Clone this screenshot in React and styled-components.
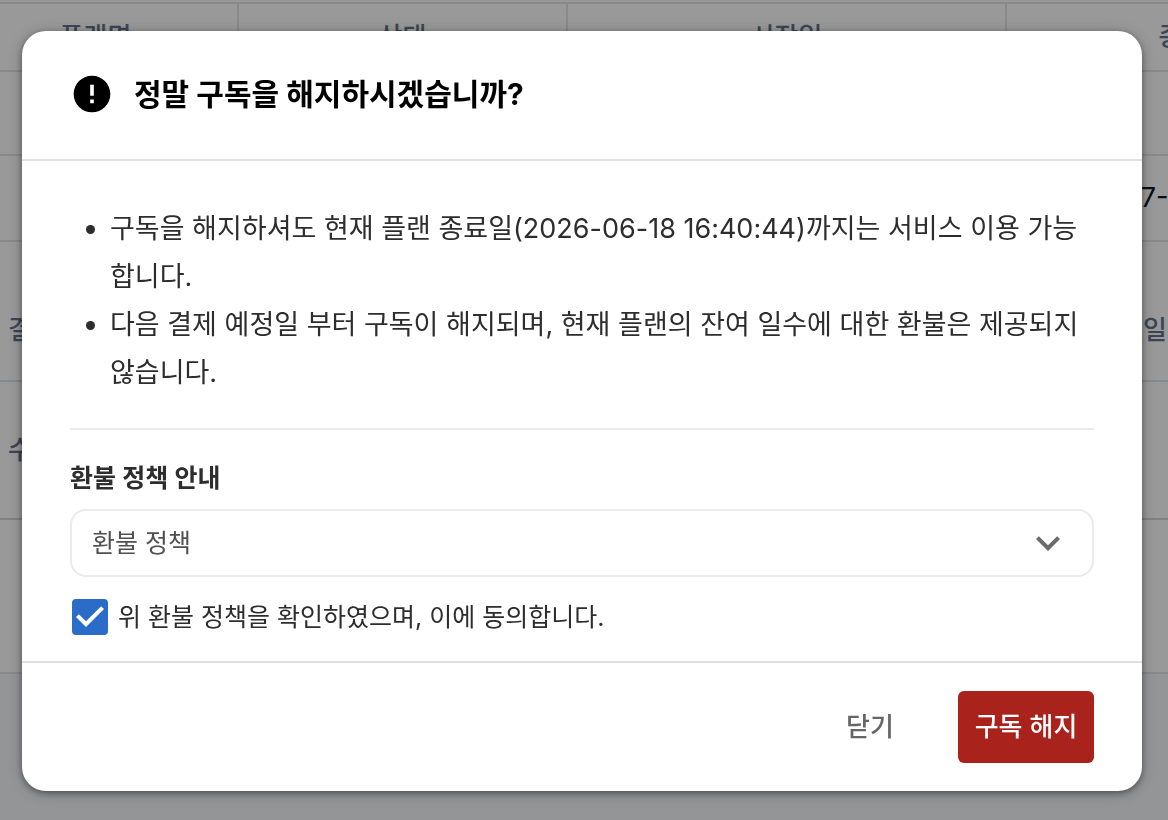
import React, { useState } from 'react';
import styled, { createGlobalStyle } from 'styled-components';
import { MdError, MdExpandMore } from 'react-icons/md';

const GlobalStyle = createGlobalStyle`
  *, *::before, *::after {
    box-sizing: border-box;
  }
  body {
    margin: 0;
    background: #f7f8fb;
    color: #2d2d2d;
    font-family: Inter, 'Noto Sans CJK KR', sans-serif;
    overflow: hidden;
  }
  button, input {
    font: inherit;
  }
`;

const Page = styled.div`
  height: 100vh;
  overflow: hidden;
`;

const Panel = styled.main`
  padding-top: 2px;
  background: #fff;
  border-bottom: 2px solid #e2e4ee;
`;

const PlanTable = styled.table`
  width: 1430px;
  margin-left: -46px;
  table-layout: fixed;
  border-collapse: separate;
  border-spacing: 0;
  border-top: 2px solid #e5e5e5;
  font-size: 27px;
  line-height: 32px;
`;

const HeadCell = styled.th`
  width: ${(props) => props.$width}px;
  height: 68px;
  padding: 0;
  border-right: 2px solid #e5e5e5;
  border-bottom: 2px solid #e5e5e5;
  color: #64748b;
  font-size: 26px;
  font-weight: 500;
`;

const Cell = styled.td`
  height: ${(props) => props.$height}px;
  padding: 0 38px;
  border-bottom: 2px solid #e5e5e5;
  color: #0f172a;
`;

const InfoRow = styled.div`
  display: flex;
  align-items: center;
  justify-content: space-between;
  height: ${(props) => props.$height}px;
  padding: ${(props) => props.$top || 0}px 1px 0 8px;
  border-bottom: 2px solid ${(props) => props.$line};
  color: #64748b;
  font-size: 26px;
  font-weight: 500;
  line-height: 36px;
`;

const Backdrop = styled.div`
  position: fixed;
  inset: 0;
  display: flex;
  align-items: flex-start;
  padding: 31px 26px 29px 22px;
  background: rgba(0, 0, 0, 0.4);
`;

const Dialog = styled.section`
  flex: 1;
  border-radius: 24px;
  background: #fff;
  box-shadow: 0 2px 6px rgba(0, 0, 0, 0.4), 0 2px 18px rgba(0, 0, 0, 0.2);
`;

const DialogHeader = styled.header`
  display: flex;
  align-items: center;
  gap: 20px;
  padding: 41px 48px 43px;
  border-bottom: 2px solid #e0e0e0;
  color: #000;
`;

const Title = styled.h2`
  margin: 0;
  font-size: 30px;
  font-weight: 700;
  line-height: 44px;
`;

const DialogBody = styled.div`
  padding: 44px 48px 26px;
`;

const NoticeList = styled.ul`
  margin: 0;
  padding: 0 0 31px 40px;
  border-bottom: 2px solid #ebebeb;
  font-size: 27px;
  line-height: 48px;
`;

const PolicyTitle = styled.h3`
  margin: 30px 0 13px;
  font-size: 25px;
  font-weight: 600;
  line-height: 36px;
`;

const PolicyToggle = styled.button`
  display: flex;
  align-items: center;
  justify-content: space-between;
  width: 100%;
  height: 68px;
  padding: 0 20px;
  border: 2px solid #ebebeb;
  border-radius: 16px;
  background: #fff;
  color: #505050;
  font-size: 25px;
  line-height: 36px;
  cursor: pointer;
`;

const Agreement = styled.label`
  display: flex;
  align-items: center;
  gap: 10px;
  margin: 22px 0 0 2px;
  font-size: 25px;
  line-height: 36px;
`;

const CheckSlot = styled.span`
  display: grid;
  > * {
    grid-area: 1 / 1;
  }
  svg {
    pointer-events: none;
  }
`;

const Checkbox = styled.input`
  width: 36px;
  height: 36px;
  margin: 0;
  appearance: none;
  border: 4px solid #757575;
  border-radius: 4px;
  &:checked {
    border-color: #2b6cc9;
    background: #2b6cc9;
  }
`;

const DialogFooter = styled.footer`
  display: flex;
  justify-content: flex-end;
  gap: 20px;
  padding: 28px 48px;
  border-top: 2px solid #e0e0e0;
`;

const Button = styled.button`
  min-width: 136px;
  height: 72px;
  padding: 0 16px;
  border: 0;
  border-radius: 6px;
  background: ${(props) => (props.$danger ? '#a9231c' : 'transparent')};
  color: ${(props) => (props.$danger ? '#fff' : '#666')};
  font-size: 26px;
  font-weight: 500;
  line-height: 36px;
  cursor: pointer;
`;

const columns = [
  { label: '플랜명', width: 285 },
  { label: '상태', width: 329 },
  { label: '시작일', width: 439 },
  { label: '종료일', width: 377 },
];

const SubscriptionPage = () => (
  <Page aria-hidden="true">
    <Panel>
      <PlanTable>
        <thead>
          <tr>
            {columns.map(({ label, width }) => (
              <HeadCell key={label} $width={width}>
                {label}
              </HeadCell>
            ))}
          </tr>
        </thead>
        <tbody>
          <tr>
            <Cell colSpan={4} $height={84} />
          </tr>
          <tr>
            <Cell colSpan={3} $height={86} />
            <Cell $height={86}>2026-07-18 16:40:44</Cell>
          </tr>
        </tbody>
      </PlanTable>
      <InfoRow $height={140} $top={38} $line="#dfe5ea">
        <span>결제</span>
        <span>결제일</span>
      </InfoRow>
      <InfoRow $height={138} $line="#d8d8d8">
        <span>수단</span>
      </InfoRow>
      <InfoRow $height={152} $line="transparent" />
    </Panel>
  </Page>
);

const CancelDialog = () => {
  const [agreed, setAgreed] = useState(true);
  const [open, setOpen] = useState(false);

  return (
    <Dialog role="dialog" aria-modal="true" aria-labelledby="cancel-title">
      <DialogHeader>
        <MdError size={44} />
        <Title id="cancel-title">정말 구독을 해지하시겠습니까?</Title>
      </DialogHeader>
      <DialogBody>
        <NoticeList>
          <li>
            구독을 해지하셔도 현재 플랜 종료일(2026-06-18 16:40:44)까지는 서비스 이용
            가능합니다.
          </li>
          <li>
            다음 결제 예정일 부터 구독이 해지되며, 현재 플랜의 잔여 일수에 대한 환불은
            제공되지 않습니다.
          </li>
        </NoticeList>
        <PolicyTitle>환불 정책 안내</PolicyTitle>
        <PolicyToggle type="button" aria-expanded={open} onClick={() => setOpen(!open)}>
          환불 정책
          <MdExpandMore size={48} color="#6b6b6b" />
        </PolicyToggle>
        <Agreement htmlFor="agree">
          <CheckSlot>
            <Checkbox
              id="agree"
              type="checkbox"
              checked={agreed}
              onChange={(e) => setAgreed(e.target.checked)}
            />
            {agreed && (
              <svg width="36" height="36" viewBox="3 3 18 18" fill="#fff" aria-hidden="true">
                <path d="M10 17l-5-5 1.41-1.41L10 14.17l7.59-7.59L19 8l-9 9z" />
              </svg>
            )}
          </CheckSlot>
          위 환불 정책을 확인하였으며, 이에 동의합니다.
        </Agreement>
      </DialogBody>
      <DialogFooter>
        <Button type="button">닫기</Button>
        <Button type="button" $danger>
          구독 해지
        </Button>
      </DialogFooter>
    </Dialog>
  );
};

const App = () => (
  <>
    <GlobalStyle />
    <SubscriptionPage />
    <Backdrop>
      <CancelDialog />
    </Backdrop>
  </>
);

export default App;
